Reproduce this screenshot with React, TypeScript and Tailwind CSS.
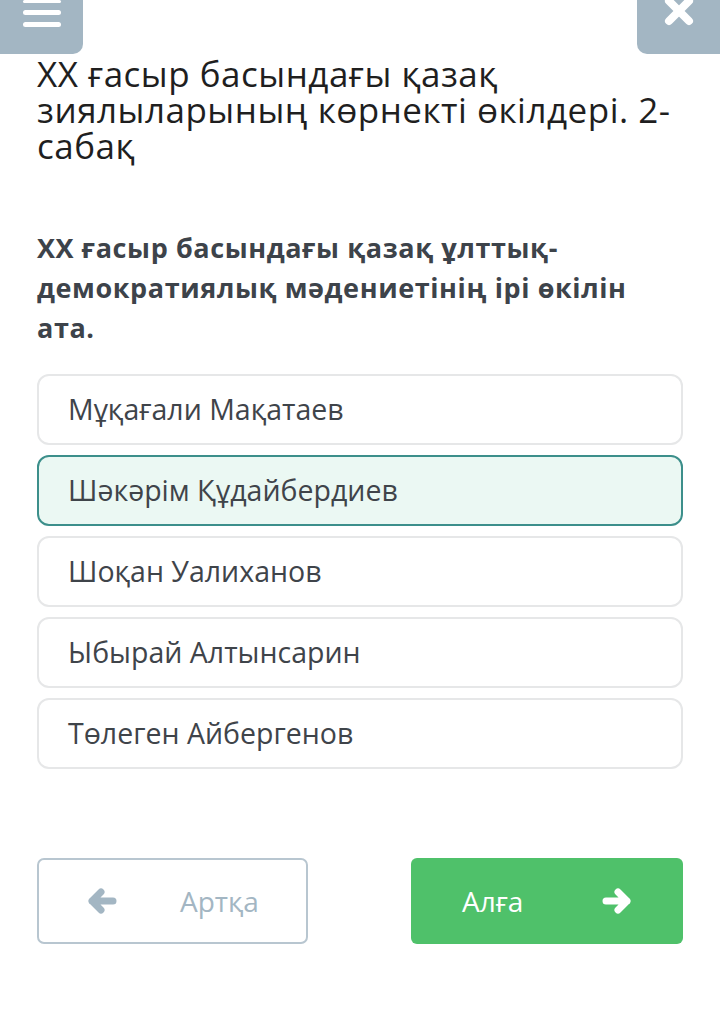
const options = [
  "Мұқағали Мақатаев",
  "Шәкәрім Құдайбердиев",
  "Шоқан Уалиханов",
  "Ыбырай Алтынсарин",
  "Төлеген Айбергенов",
]

function Arrow({ dir }: { dir: "left" | "right" }) {
  return (
    <svg
      width="30"
      height="26"
      viewBox="0 0 30 26"
      className={dir === "right" ? "rotate-180" : ""}
    >
      <path
        d="M5 13 H26 M5 13 L14 4 M5 13 L14 22"
        stroke="currentColor"
        strokeWidth="7"
        strokeLinecap="round"
        strokeLinejoin="round"
        fill="none"
      />
    </svg>
  )
}

export default function App() {
  return (
    <div
      className="w-[720px] h-[1011px] bg-white overflow-hidden"
      style={{ fontFamily: '"Open Sans", "Noto Sans", sans-serif' }}
    >
      {/* top bar */}
      <div className="flex justify-between h-[54px]">
        <button className="w-[83px] h-[54px] bg-[#a3b6c3] rounded-br-[10px] flex flex-col items-center gap-[7px]">
          <span className="block w-[38px] h-[3px] bg-white rounded-sm" />
          <span className="block w-[38px] h-[5px] bg-white rounded-sm" />
          <span className="block w-[38px] h-[5px] bg-white rounded-sm" />
        </button>
        <button className="w-[83px] h-[54px] bg-[#a3b6c3] rounded-bl-[10px] flex justify-center">
          <svg width="30" height="28" viewBox="0 0 30 28" className="-mt-[2px]">
            <path d="M5 3 L25 23 M25 3 L5 23" stroke="white" strokeWidth="8" strokeLinecap="round" />
          </svg>
        </button>
      </div>

      <div className="px-[37px]">
        <h1 className="text-[35px] leading-[36px] tracking-[0.5px] font-normal text-[#1f1f1f] mt-[2px]">
          ХХ ғасыр басындағы қазақ зиялыларының көрнекті өкілдері. 2-сабақ
        </h1>

        <p className="mt-[64px] text-[27px] leading-[40px] tracking-[0.6px] font-bold text-[#3d434a] pr-[10px]">
          ХХ ғасыр басындағы қазақ ұлттық-демократиялық мәдениетінің ірі өкілін ата.
        </p>

        <div className="mt-[26px] flex flex-col gap-[10px]">
          {options.map((o, i) => (
            <div
              key={o}
              className={
                i === 1
                  ? "h-[71px] rounded-[12px] border-2 border-[#3c8f8b] bg-[#ebf8f3] flex items-center px-[29px] text-[28.5px] text-[#3f444a]"
                  : "h-[71px] rounded-[12px] border-2 border-[#e6e7e8] bg-white flex items-center px-[29px] text-[28.5px] text-[#3f444a]"
              }
            >
              {o}
            </div>
          ))}
        </div>

        <div className="mt-[89px] flex justify-between">
          <button className="w-[271px] h-[86px] rounded-[7px] border-2 border-[#b8c6d0] bg-white flex items-center pl-[48px] text-[28px] text-[#a3b6c3]">
            <Arrow dir="left" />
            <span className="ml-[63px]">Артқа</span>
          </button>
          <button className="w-[272px] h-[86px] rounded-[6px] bg-[#4fc16a] flex items-center pl-[51px] pr-[51px] justify-between text-[28px] text-white">
            <span>Алға</span>
            <Arrow dir="right" />
          </button>
        </div>
      </div>
    </div>
  )
}
